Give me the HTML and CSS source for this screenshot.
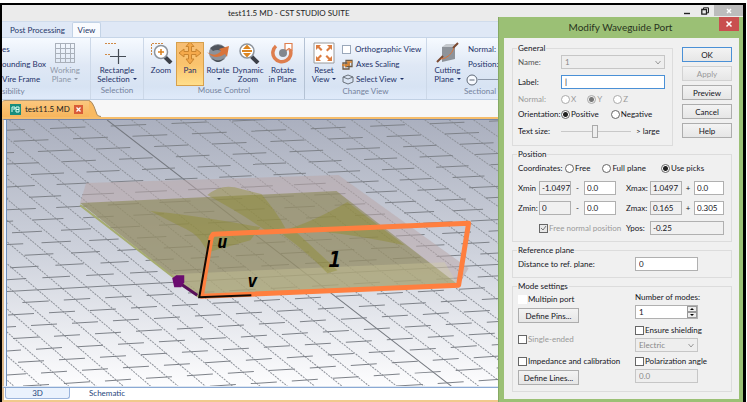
FILE: index.html
```html
<!DOCTYPE html>
<html lang="en">
<head>
<meta charset="utf-8">
<title>test11.5 MD - CST STUDIO SUITE</title>
<link rel="stylesheet" href="styles.css">
</head>
<body>
<main class="app">
  <header class="titlebar">
    <span class="title">test11.5 MD - CST STUDIO SUITE</span>
    <div class="winbuttons">
      <button aria-label="Minimize"><svg width="8" height="8"><path d="M1 6.5h6" stroke="#222" stroke-width="1.4"/></svg></button>
      <button aria-label="Restore"><svg width="8" height="8" fill="none" stroke="#222"><path d="M2.5 2V.8h5v5H6"/><path d="M.8 2.5h4.700v4.700H.8z" stroke-width="1.300"/></svg></button>
      <button class="inactive-close" aria-label="Close"><svg width="8" height="8" stroke="#fff" stroke-width="1.500"><path d="M2 2l4 4M6 2L2 6"/></svg></button>
    </div>
  </header>

  <nav class="tabs">
    <a href="#">Post Processing</a>
    <a href="#" class="active">View</a>
  </nav>

  <section class="ribbon">
    <div class="group visibility">
      <div class="items">
        <div class="stack clipped"><span>es</span><span>ounding Box</span><span>Vire Frame</span></div>
        <button class="tool disabled"><svg viewBox="0 0 24 22"><g fill="none" stroke="#a9b0ba"><path d="M2 1.500h20M2 6.500h20M2 11.500h20M2 16.500h20M2 20.500h20"/><path d="M2.500 1v20M7.500 1v20M12.500 1v20M17.500 1v20M21.500 1v20"/></g></svg><span>Working<br>Plane <i></i></span></button>
      </div>
      <div class="caption left">sibility</div>
    </div>
    <div class="group selection">
      <div class="items"><button class="tool"><svg viewBox="0 0 24 22"><path d="M0 1.500h12M0 12.500h5" stroke="#d08a45" stroke-dasharray="2 1"/><path d="M5 14.500h16M13.500 7v15" stroke="#444b55" stroke-width="1.200"/></svg><span>Rectangle<br>Selection <i></i></span></button></div>
      <div class="caption">Selection</div>
    </div>
    <div class="group mouse">
      <div class="items">
        <button class="tool"><svg viewBox="0 0 24 22"><path d="M2.500 13V1.500H14" fill="none" stroke="#d08a45" stroke-dasharray="2 1"/><path d="M16 15l6 6" stroke="#3c4048" stroke-width="4"/><circle cx="12" cy="10" r="6.500" fill="#fff" stroke="#8d949c" stroke-width="1.500"/><path d="M9 10h6M12 7v6" stroke="#d9811f" stroke-width="1.500"/></svg><span>Zoom</span></button>
        <button class="tool pressed"><svg viewBox="0 0 24 22"><path d="M12 0l4 4.500h-2.500V9.500H18V7l5 4-5 4v-2.500h-4.500V17H16l-4 5-4-5h2.500v-4.500H6V15l-5-4 5-4v2.500h4.500V4.500H8z" fill="#f5a94b" stroke="#c9842f"/></svg><span>Pan</span></button>
        <button class="tool"><svg viewBox="0 0 24 22"><circle cx="12" cy="11" r="9" fill="#8c929a"/><path d="M4 6q8-6 16 0l-4 3q-5-2-9 0z" fill="#50555d"/><path d="M1 10q8 6 14-1l-2-2 10-3-2 11-2-3q-10 7-18-2z" fill="#d9743b"/><path d="M6 16q6 5 12 0-6 8-12 0z" fill="#444a52"/></svg><span>Rotate<br><i></i></span></button>
        <button class="tool"><svg viewBox="0 0 24 22"><path d="M15 14l7 7" stroke="#3c4048" stroke-width="4"/><circle cx="11" cy="9" r="7" fill="#fff" stroke="#8d949c" stroke-width="1.500"/><path d="M11 2.500l4 4.500H7zM11 15.500l4-4.500H7zM6 8h10v2H6z" fill="#dd8620"/></svg><span>Dynamic<br>Zoom</span></button>
        <button class="tool"><svg viewBox="0 0 24 22"><path d="M5 4a9 9 0 1 0 14 3" fill="none" stroke="#de7e4e" stroke-width="3.500"/><path d="M14 1.500h7v7l-3-2-4 3V5z" fill="#fff" stroke="#de7e4e" stroke-width="1.200"/><circle cx="12" cy="11" r="4" fill="#82878e"/></svg><span>Rotate<br>in Plane</span></button>
      </div>
      <div class="caption">Mouse Control</div>
    </div>
    <div class="group change">
      <div class="items">
        <button class="tool"><svg viewBox="0 0 24 22"><path d="M2 1h20v20H2z" fill="#fff" stroke="#9a9a9a"/><g fill="#dc7d40"><path d="M4 3h5L7.500 4.500l3 3-1.500 1.500-3-3L4 8zM20 3v5l-1.500-1.500-3 3L14 8l3-3L15 3zM4 19v-5l1.500 1.500 3-3L10 14l-3 3 2 2zM20 19h-5l1.500-1.500-3-3L15 13l3 3 2-2z"/></g></svg><span>Reset<br>View <i></i></span></button>
        <div class="stack">
          <label><input type="checkbox">Orthographic View</label>
          <button class="line"><svg width="12" height="11" fill="none"><path d="M1 4h6v6H1zM4 1.500h6v6H4z" stroke="#6d5b45" stroke-width="1.300"/><path d="M0 6h8M5 3h5M3 8l5-5" stroke="#d9842f" stroke-width="1.300"/></svg>Axes Scaling</button>
          <button class="line"><svg width="12" height="11" fill="none" stroke="#6b727b"><path d="M1 3l5-2 5 2v5l-5 2-5-2zM1 3l5 2 5-2"/></svg>Select View <i></i></button>
        </div>
      </div>
      <div class="caption">Change View</div>
    </div>
    <div class="group section">
      <div class="items">
        <button class="tool"><svg viewBox="0 0 24 22"><path d="M6 5l13-2v14l-13 3z" fill="#8e939a"/><path d="M6 5l4-3h12l-3 3z" fill="#c5c9ce"/><path d="M1 20l6-6M17 6l5-5" stroke="#7b4a32" stroke-width="2"/><path d="M5 17q9-1 13-11" stroke="#d9743b" fill="none"/></svg><span>Cutting<br>Plane <i></i></span></button>
        <div class="stack"><span>Normal:</span><span>Position:</span><span class="zoomline"><svg width="12" height="12" fill="#f7faff" stroke="#5e6876"><circle cx="6" cy="6" r="5"/><path d="M3.500 6h5"/></svg><b></b></span></div>
      </div>
      <div class="caption section-caption">Sectional View</div>
    </div>
  </section>

  <div class="documents">
    <a href="#" class="doc"><svg width="11" height="11"><path d="M0 0h11v11H0z" fill="#178d7d"/><path d="M2 8V3h3v2H3M6 3h3v5H6zM6 5.500h3" fill="none" stroke="#d9fff5"/></svg>test11.5 MD
      <svg width="9" height="9"><path d="M0 0h9v9H0z" fill="#d95c38"/><path d="M2.500 2.500l4 4M6.500 2.500l-4 4" stroke="#fff" stroke-width="1.300"/></svg></a>
    <svg class="slant" width="12" height="17"><path d="M0 0q3 1 5 6l3 8q1 2 4 3H0z" fill="#f9ba62"/><path d="M0 .5q3 1 5 6l3 8q1 2 4 2" fill="none" stroke="#a48a68"/></svg>
  </div>

  <section class="viewport">
    <svg class="scene" viewBox="7 120 735 266" preserveAspectRatio="xMinYMin slice" aria-label="Waveguide model with port 1">
      <defs><linearGradient id="sky" x1="0" y1="0" x2="0" y2="1"><stop offset="0" stop-color="#abb0bf"/><stop offset=".5" stop-color="#ced2dc"/><stop offset="1" stop-color="#fdfdfe"/></linearGradient></defs>
      <path d="M7 120h735v266H7z" fill="url(#sky)"/>
      <g id="grid"></g>
      <path d="M86 183L338 175 468 268 458 285 199 297 80 203z" fill="#b9a8aa" fill-opacity=".55"/>
      <path d="M80 203L336 191 457 284 199 297z" fill="#85834a" fill-opacity=".55"/>
      <path d="M171 274L444 262 457 284 199 297z" fill="#d8d4a0" fill-opacity=".3"/>
      <g fill="#8b8921" fill-opacity=".38">
        <path d="M150 211q35 3 110 16l-10 13-42 12-8-12q-6-8-20-14z"/>
        <path d="M207 195q15-13 34-6l20 5q16 19 24 34l-20 2q-25-17-58-35z"/>
        <path d="M347 202l57 43q-47-10-86-14l-34-1q26-7 63-28z"/>
        <path d="M282 234l14-2 41 38-10 3q-20-21-45-39z"/>
      </g>
      <path d="M80 205L199 297" stroke="#a6ac70" stroke-width="2"/>
      <path d="M201 296L211 237 213 234 468 223 458 285z" fill="none" stroke="#ff7f3f" stroke-width="5" stroke-linejoin="round"/>
      <path d="M209 240L199 297 251 295" fill="none" stroke="#120b06" stroke-width="2"/>
      <path d="M181 284l16 11" stroke="#57105a" stroke-width="3"/>
      <path d="M172 278l4-3h8v7l-3 5h-7z" fill="#6b0c70"/>
      <g class="marks"><text x="217" y="248">u</text><text x="247" y="287">v</text><text x="328" y="267" class="port">1</text></g>
    </svg>
  </section>

  <footer class="viewtabs"><a href="#" class="active">3D</a><a href="#">Schematic</a></footer>
</main>

<section class="dialog" role="dialog" aria-labelledby="dlg-title">
  <header><h1 id="dlg-title">Modify Waveguide Port</h1><button class="close" aria-label="Close dialog"><svg width="8" height="8" stroke="#fff" stroke-width="1.500"><path d="M1.500 1.500l5 5M6.500 1.500l-5 5"/></svg></button></header>
  <form class="panel">
    <div class="top">
      <fieldset class="general"><legend>General</legend>
        <label for="name" class="dim-label">Name:</label><select id="name" disabled><option>1</option></select>
        <label for="label">Label:</label><input id="label" type="text" class="focused" value="|">
        <span class="dim">Normal:</span><div class="radios dim"><label><input type="radio" name="normal" disabled>X</label><label><input type="radio" name="normal" disabled checked>Y</label><label><input type="radio" name="normal" disabled>Z</label></div>
        <span>Orientation:</span><div class="radios wide"><label><input type="radio" name="ori" checked>Positive</label><label><input type="radio" name="ori">Negative</label></div>
        <label for="size">Text size:</label><div class="size"><input id="size" type="range" value="48"><span>&gt; large</span></div>
      </fieldset>
      <div class="actions"><button type="button" class="default">OK</button><button type="button" disabled>Apply</button><button type="button">Preview</button><button type="button">Cancel</button><button type="button">Help</button></div>
    </div>

    <fieldset class="position"><legend>Position</legend>
      <div class="coords"><span>Coordinates:</span><label><input type="radio" name="coord">Free</label><label><input type="radio" name="coord">Full plane</label><label><input type="radio" name="coord" checked>Use picks</label></div>
      <div class="bounds">
        <label for="xmin">Xmin</label><input id="xmin" type="text" readonly value="-1.0497"><span>-</span><input type="text" aria-label="Xmin offset" value="0.0">
        <label for="xmax" class="second">Xmax:</label><input id="xmax" type="text" readonly value="1.0497"><span>+</span><input type="text" aria-label="Xmax offset" value="0.0">
        <label for="zmin">Zmin:</label><input id="zmin" type="text" readonly value="0"><span>-</span><input type="text" aria-label="Zmin offset" value="0.0">
        <label for="zmax" class="second">Zmax:</label><input id="zmax" type="text" readonly value="0.165"><span>+</span><input type="text" aria-label="Zmax offset" value="0.305">
        <label class="free dim"><input type="checkbox" checked disabled>Free normal position</label>
        <label for="ypos" class="second">Ypos:</label><input id="ypos" class="ypos" type="text" readonly value="-0.25">
      </div>
    </fieldset>

    <fieldset class="reference"><legend>Reference plane</legend>
      <label for="dist">Distance to ref. plane:</label><input id="dist" type="text" value="0">
    </fieldset>

    <fieldset class="mode"><legend>Mode settings</legend>
      <div class="col left-col">
        <label><input type="checkbox" class="faint">Multipin port</label>
        <button type="button">Define Pins...</button>
        <label class="dim single"><input type="checkbox" disabled>Single-ended</label>
        <label class="imp"><input type="checkbox">Impedance and calibration</label>
        <button type="button">Define Lines...</button>
      </div>
      <div class="col">
        <label for="modes">Number of modes:</label>
        <div class="spinner"><input id="modes" type="text" value="1"><div class="steps"><button type="button" aria-label="Increase"><svg width="4" height="2"><path d="M0 2l2-2 2 2z"/></svg></button><button type="button" aria-label="Decrease"><svg width="4" height="2"><path d="M0 0h4L2 2z"/></svg></button></div></div>
        <label class="ensure"><input type="checkbox">Ensure shielding</label>
        <select disabled aria-label="Shielding type"><option>Electric</option></select>
        <label class="polar"><input type="checkbox">Polarization angle</label>
        <input type="text" disabled aria-label="Polarization angle value" value="0.0">
      </div>
    </fieldset>
  </form>
</section>
<script src="scene.js"></script>
</body>
</html>
```
FILE: styles.css
```css
* { box-sizing: border-box; }
html, body { height: 100%; }
body { margin: 0; padding-top: 3px; background: #fff; color: #15151c; font: 8px/9px Lato, "Liberation Sans", sans-serif; overflow: hidden; position: relative; }
button, input, select { font: inherit; color: inherit; margin: 0; padding: 0; border: 0; background: none; border-radius: 0; }
a { color: inherit; text-decoration: none; }
svg { display: block; flex: none; }

.app { height: 100%; display: flex; flex-direction: column; border: 2px solid #000; border-right-width: 3px; border-bottom: 0; background: #f7f7f7; margin-right: 1px; }
.titlebar { flex: none; height: 16px; display: flex; justify-content: space-between; background: #ebebeb; padding-left: 226px; }
.title { line-height: 17px; color: #222; }
.winbuttons { display: flex; }
.winbuttons button { width: 18px; height: 11px; display: flex; align-items: center; justify-content: center; }
.winbuttons .inactive-close { width: 29px; background: #bcbcbc; }

.tabs { flex: none; height: 16px; display: flex; background: #dfe8f6; color: #1f3568; border-top: 1px solid #d0dcec; padding-left: 8px; }
.tabs a { line-height: 17px; }
.tabs .active { margin-left: 7px; width: 29px; text-align: center; background: #f9fbfe; border: 1px solid #c3d3e6; border-bottom: 0; border-radius: 2px 2px 0 0; line-height: 15px; }

.ribbon { flex: none; height: 63px; display: flex; border-top: 1px solid #c6d5e8; border-bottom: 1px solid #c0d0e4; background: linear-gradient(#f6faff, #dfe8f5 45%, #d7e3f3 80%, #dfeafa); color: #1d3168; }
.group { flex: none; display: flex; flex-direction: column; justify-content: space-between; padding: 4px 0 4px; border-right: 1px solid #ccd8e8; overflow: hidden; white-space: nowrap; }
.visibility { width: 89px; }
.selection { width: 53px; }
.mouse { width: 161px; border-color: #b4c2d4; }
.change { width: 122px; }
.section { flex: 1; border: 0; }
.items { display: flex; }
.caption { text-align: center; color: #75829c; line-height: 9px; }
.caption.left { text-align: left; }
.section-caption { text-align: left; padding-left: 37px; }
.tool { display: flex; flex-direction: column; align-items: center; color: inherit; width: 32px; height: 44px; flex: none; text-align: center; }
.tool svg { width: 24px; height: 22px; margin-bottom: 2px; }
.tool.disabled { color: #8e98a8; width: 38px; }
.selection .tool { width: 100%; }
.mouse .items { padding-left: 2px; }
.mouse .tool:first-child { width: 30px; }
.mouse .tool:nth-child(3) { width: 28px; }
.mouse .tool:nth-child(5) { width: 37px; }
.mouse .pressed { width: 28px; background: linear-gradient(#f6bd74, #fac36d 50%, #ffdf8d); outline: 1px solid #d6a04c; outline-offset: -1px; }
.change .tool { width: 36px; margin-left: 1px; }
.section .tool { width: 41px; }
.tool i, .line i { display: inline-block; border: 2px solid transparent; border-top-color: currentColor; border-bottom: 0; margin: 0 0 2px 1px; }
.stack { display: flex; flex-direction: column; }
.stack > * { height: 15px; display: flex; align-items: center; gap: 4px; }
.clipped { width: 45px; overflow: hidden; }
.clipped + .tool { width: 36px; }
.stack .line { gap: 2px; }
.zoomline svg { margin-left: -2px; }
.zoomline b { width: 30px; border-top: 1px solid #8c98aa; margin-left: -4px; }

.documents { flex: none; height: 19px; display: flex; background: #f7f7f7; border-bottom: 2px solid #f6bd6b; }
.doc { display: flex; align-items: center; gap: 4px; height: 17px; padding: 0 6px 0 8px; background: linear-gradient(#fbc77e, #f7b55c); border-top: 1px solid #b79b74; border-radius: 3px 0 0 0; color: #222; white-space: nowrap; }

.viewport { flex: 1; min-height: 0; border-left: 2px solid #deb98a; border-top: 1px solid #7786a7; border-bottom: 1px solid #dce5f1; padding-left: 2px; background: #eef4fd; overflow: hidden; }
.scene { width: 100%; height: 100%; border-left: 1px solid #6f8fba; }
.marks { font: italic bold 17px "DejaVu Sans Mono", monospace; }
.marks .port { font-size: 21px; }
.viewtabs { flex: none; height: 15px; display: flex; background: #fff; border-top: 1px solid #8aa9d4; border-bottom: 2px solid #f1c98c; border-left: 2px solid #deb98a; color: #27467c; padding-left: 1px; line-height: 10px; }
.viewtabs a { padding-left: 19px; }
.viewtabs .active { width: 65px; padding: 0; height: 11px; text-align: center; background: #eaf2fd; border: 1px solid #9bb4dc; border-top: 0; border-radius: 0 0 3px 3px; }

.dialog { position: absolute; top: 17px; right: 4px; width: 245px; background: #9bc075; padding: 0 4px 3px 5px; border-left: 1px solid #86a964; }
.dialog header { height: 21px; display: flex; justify-content: flex-end; align-items: flex-start; }
.dialog h1 { flex: 1; margin: 0; font: 10px/21px Lato, sans-serif; text-align: center; padding-left: 18px; color: #283320; }
.close { width: 20px; height: 14px; background: #c94f4f; display: flex; align-items: center; justify-content: center; }
.panel { background: #f0f0f0; padding: 6px 7px 7px 8px; display: flex; flex-direction: column; gap: 4px; white-space: nowrap; }
.top { display: flex; gap: 9px; }
fieldset { min-width: 0; margin: 0; padding: 0 5px 3px; border: 1px solid #dcdcdc; }
legend { padding: 0 1px; margin-left: -1px; line-height: 8px; height: 8px; }
label { display: flex; align-items: center; }
.dim, .dim-label { color: #9a9a9a; }
.dim-label { color: #555; }

input[type="text"], select { width: 100%; height: 14px; background: #fff; border: 1px solid #b0b0b0; padding: 0 3px; min-width: 0; }
input[readonly] { background: #f0f0f0; }
input:disabled, select:disabled { background: #eee; color: #888; opacity: 1; border-color: #c6c6c6; }
select { appearance: none; background: #eee url("data:image/svg+xml,%3Csvg xmlns='http://www.w3.org/2000/svg' width='6' height='5'%3E%3Cpath d='M.5 1L3 4l2.500-3' fill='none' stroke='%23999'/%3E%3C/svg%3E") no-repeat right 3px center !important; }
.focused[type="text"] { border-color: #4a90d6; }
input[type="radio"], input[type="checkbox"] { appearance: none; flex: none; width: 9px; height: 9px; border: 1px solid #666; background: #fff; margin-right: 1px; }
input[type="radio"] { border-radius: 50%; }
input[type="radio"]:checked { background: radial-gradient(circle, #222 0 2px, #fff 3px); }
input[type="radio"]:disabled { border-color: #aaa; }
input[type="radio"]:disabled:checked { background: radial-gradient(circle, #777 0 2px, #eee 3px); }
input[type="checkbox"].faint { border-color: #fff; }
.stack input[type="checkbox"] { border-color: #9aa8ba; margin: 0; }
.free input:checked { background: #e8e8e8 url("data:image/svg+xml,%3Csvg xmlns='http://www.w3.org/2000/svg' width='7' height='7'%3E%3Cpath d='M1 3l2 2 3-4' fill='none' stroke='%23777'/%3E%3C/svg%3E") no-repeat center; }

.general { flex: 1; display: grid; grid-template-columns: 43px 1fr; grid-template-rows: 20px 20px 15px 15px 18px; align-items: center; padding-right: 7px; padding-bottom: 5px; }
.radios { display: flex; gap: 11px; }
.radios.wide { gap: 12px; }
.size { display: flex; gap: 5px; align-items: center; }
.size input { width: 70px; height: 14px; appearance: none; background: linear-gradient(#c8c8c8, #c8c8c8) center / 100% 1px no-repeat; }
.size input::-webkit-slider-thumb { appearance: none; width: 6px; height: 13px; background: #eee; border: 1px solid #aaa; }
.actions { width: 50px; padding-top: 3px; display: flex; flex-direction: column; gap: 4px; }
.panel .actions button, .col > button { height: 15px; background: linear-gradient(#f3f3f3, #e6e6e6); border: 1px solid #adadad; line-height: 12px; text-align: center; }
.panel .actions .default { border-color: #4a90d6; }
.panel .actions button:disabled { color: #999; border-color: #d2d2d2; }

.coords { height: 20px; display: flex; align-items: center; }
.coords span { width: 47px; }
.coords label { margin-right: 12px; }
.coords label:last-child { margin: 0 0 0 3px; }
.bounds { display: grid; grid-template-columns: 21px 32px 13px 32px 34px 32px 12px 1fr; grid-auto-rows: 20px; align-items: center; padding-right: 2px; }
.bounds input[type="text"] { padding: 0 0 0 2px; }
.bounds span { text-align: center; }
.bounds .second { padding-left: 10px; }
.bounds .free { grid-column: 2 / 5; }
.bounds .ypos { grid-column: 6 / 9; }
.reference { display: grid; grid-template-columns: 117px 63px; align-items: center; grid-template-rows: 20px; }
.mode { display: grid; grid-template-columns: 117px 1fr; height: 110px; }
.col { display: flex; flex-direction: column; align-items: flex-start; height: 97px; }
.left-col { padding-top: 5px; }
.col > button { width: 61px; margin-top: 4px; }
.col .single { margin-top: 12px; }
.col .imp { margin-top: 13px; }
.col > select, .col > input, .spinner { width: 63px; }
.col > label[for] { margin: 3px 0 3px; }
.spinner { display: flex; position: relative; }
.steps { position: absolute; right: 1px; top: 1px; display: flex; flex-direction: column; }
.steps button { width: 10px; height: 6px; border: 1px solid #999; background: #eee; display: grid; place-items: center; }
.col .ensure { margin: 7px 0 3px; }
.col .polar { margin: 5px 0 3px; }
```
FILE: scene.js
```js
// Draws the perspective floor grid behind the model.
const grid = document.getElementById("grid");
const add = (x1, y1, x2, y2, stroke, dash, offset) => {
  const line = document.createElementNS("http://www.w3.org/2000/svg", "line");
  const attrs = { x1, y1, x2, y2, stroke, "stroke-width": 1 };
  if (dash) { attrs["stroke-dasharray"] = dash; attrs["stroke-dashoffset"] = offset; }
  for (const name in attrs) line.setAttribute(name, attrs[name]);
  grid.appendChild(line);
};

// Receding lines: the one at k = 0 is the solid axis.
for (let k = -18; k <= 26; k++) {
  add(107 + 24.4 * k, 120, 451 + 27.3 * k, 386, k ? "#8f939b" : "#74787f", k ? "2 1" : "", 0);
}

// Cross lines: dashes shorten and spacing widens towards the viewer.
let y = 119;
for (let row = 0; y < 432; row++) {
  const dash = Math.max(26, 36 - row * 0.6);
  const gap = Math.max(15, 26 - row * 0.7);
  const period = dash + gap;
  const start = 27 + row * 23;
  const slope = -0.04 - row * 0.001;
  const offset = ((7 - start) % period + period) % period;
  add(7, y, 742, y + slope * 735, "#7e8289", row === 15 ? "" : dash + " " + gap, offset);
  y += 11.2 + row * 0.04;
}
```
